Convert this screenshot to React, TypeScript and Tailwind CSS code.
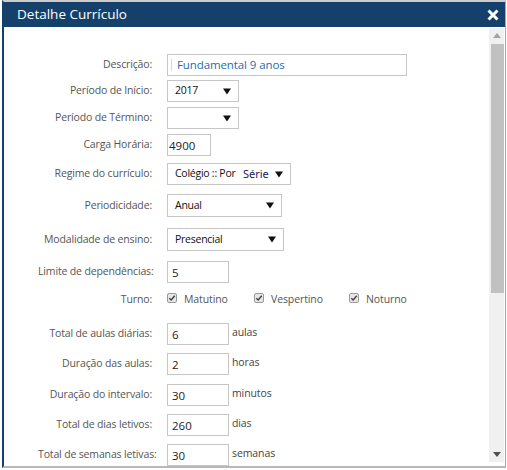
import type { ReactNode } from "react";

const font = { fontFamily: '"Segoe UI", "Open Sans", sans-serif' };

function Label({ children }: { children: ReactNode }) {
  return (
    <div className="w-[114px] shrink-0 whitespace-nowrap text-right text-[10.5px] tracking-[-0.15px] text-[#555]">
      {children}
    </div>
  );
}

function Row({ label, className, children }: { label: string; className: string; children: ReactNode }) {
  return (
    <div className={`flex items-center gap-[15px] ${className}`}>
      <Label>{label}</Label>
      {children}
    </div>
  );
}

function Arrow() {
  return (
    <svg width="8" height="7" viewBox="0 0 8 7" className="shrink-0">
      <path d="M0 0.5 L8 0.5 L4 6.5 Z" fill="#111" />
    </svg>
  );
}

function Select({ w, h = "h-[22px]", children }: { w: string; h?: string; children?: ReactNode }) {
  return (
    <div className={`flex ${w} ${h} items-center justify-between border border-[#c6c6c6] bg-white pl-[7px] pr-[7px] text-[10.5px] tracking-[-0.25px] text-[#111]`}>
      <span className="flex items-center whitespace-nowrap">{children}</span>
      <Arrow />
    </div>
  );
}

function Field({ w, value, pad = "pl-[4px]" }: { w: string; value: string; pad?: string }) {
  return (
    <div className={`flex ${w} h-[22px] items-end border border-[#c6c6c6] bg-white ${pad} pb-[2px] text-[11.5px] leading-[14px] text-[#222]`}>
      {value}
    </div>
  );
}

function Unit({ children }: { children: ReactNode }) {
  return <span className="-ml-[12px] -mt-[3px] text-[10.5px] tracking-[-0.1px] text-[#444]">{children}</span>;
}

function Check({ label, className }: { label: string; className: string }) {
  return (
    <div className={`flex items-center ${className}`}>
      <svg width="10" height="10" viewBox="0 0 10 10" className="-mt-[4px]">
        <rect x="0.5" y="0.5" width="9" height="9" rx="1.5" fill="#e6e6e6" stroke="#9a9a9a" />
        <path d="M2.3 5.2 L4.2 7 L7.7 2.8" fill="none" stroke="#404040" strokeWidth="1.4" />
      </svg>
      <span className="ml-[7px] text-[10.5px] tracking-[-0.1px] text-[#555]">{label}</span>
    </div>
  );
}

export default function App() {
  return (
    <div className="h-[470px] w-[507px] overflow-hidden bg-white" style={font}>
      <div className="ml-[2px] w-[504px] border-b-2 border-l-2 border-r border-t-2 border-b-[#b8b8b8] border-l-[#15406b] border-r-[#a8a8a8] border-t-[#cdcdcd]">
        <div className="flex h-[25px] items-center justify-between bg-[#15406b] pl-[13px] pr-[6px] text-white">
          <span className="text-[13.5px]">Detalhe Currículo</span>
          <svg width="12" height="12" viewBox="0 0 12 12">
            <path d="M1.5 1.5 L10.5 10.5 M10.5 1.5 L1.5 10.5" stroke="#fff" strokeWidth="3" />
          </svg>
        </div>
        <div className="flex h-[439px]">
          <div className="flex-1 overflow-hidden pl-[34px] pt-[27px]">
            <Row label="Descrição:" className="h-[22px]">
              <div className="flex h-[22px] w-[240px] items-center border border-[#c6c6c6] bg-white pl-[3px] text-[11.5px] tracking-[-0.1px] text-[#1f6db0]">
                <span className="mr-[5px] h-[12px] w-px bg-[#d8d8d8]" />
                Fundamental 9 anos
              </div>
            </Row>
            <Row label="Período de Início:" className="mt-[4px] h-[22px]">
              <Select w="w-[72px]">2017</Select>
            </Row>
            <Row label="Período de Término:" className="mt-[5px] h-[22px]">
              <Select w="w-[72px]" />
            </Row>
            <Row label="Carga Horária:" className="mt-[5px] h-[22px]">
              <Field w="w-[44px]" value="4900" pad="pl-[1px]" />
            </Row>
            <Row label="Regime do currículo:" className="mt-[7px] h-[22px]">
              <Select w="w-[124px]">
                <span className="w-[62px] overflow-hidden">Colégio :: Por</span>
                <span className="ml-[6px] text-[11px] tracking-normal text-[#14205e]" style={{ fontFamily: '"Noto Sans", sans-serif' }}>
                  Série
                </span>
              </Select>
            </Row>
            <Row label="Periodicidade:" className="mt-[9px] h-[23px]">
              <Select w="w-[115px]" h="h-[23px]">Anual</Select>
            </Row>
            <Row label="Modalidade de ensino:" className="mt-[11px] h-[23px]">
              <Select w="w-[117px]" h="h-[23px]">Presencial</Select>
            </Row>
            <Row label="Limite de dependências:" className="mt-[10px] h-[22px]">
              <Field w="w-[62px]" value="5" />
            </Row>
            <Row label="Turno:" className="mt-[5px] h-[24px]">
              <div className="flex items-center">
                <Check label="Matutino" className="w-[87px]" />
                <Check label="Vespertino" className="w-[95px]" />
                <Check label="Noturno" className="" />
              </div>
            </Row>
            <Row label="Total de aulas diárias:" className="mt-[11px] h-[22px]">
              <Field w="w-[62px]" value="6" />
              <Unit>aulas</Unit>
            </Row>
            <Row label="Duração das aulas:" className="mt-[8px] h-[22px]">
              <Field w="w-[62px]" value="2" />
              <Unit>horas</Unit>
            </Row>
            <Row label="Duração do intervalo:" className="mt-[9px] h-[22px]">
              <Field w="w-[62px]" value="30" />
              <Unit>minutos</Unit>
            </Row>
            <Row label="Total de dias letivos:" className="mt-[8px] h-[22px]">
              <Field w="w-[62px]" value="260" />
              <Unit>dias</Unit>
            </Row>
            <Row label="Total de semanas letivas:" className="mt-[8px] h-[22px]">
              <Field w="w-[62px]" value="30" />
              <Unit>semanas</Unit>
            </Row>
          </div>
          <div className="mb-[4px] mr-px mt-px flex w-[15px] flex-col bg-[#f0f0f0]">
            <div className="flex h-[15px] items-center justify-center">
              <svg width="8" height="5" viewBox="0 0 8 5">
                <path d="M0 5 L4 0 L8 5 Z" fill="#a3a3a3" />
              </svg>
            </div>
            <div className="ml-[2px] mt-[1px] h-[249px] w-[13px] bg-[#c1c1c1]" />
            <div className="flex-1" />
            <div className="flex h-[15px] items-center justify-center">
              <svg width="8" height="5" viewBox="0 0 8 5">
                <path d="M0 0 L8 0 L4 5 Z" fill="#505050" />
              </svg>
            </div>
          </div>
        </div>
      </div>
    </div>
  );
}
